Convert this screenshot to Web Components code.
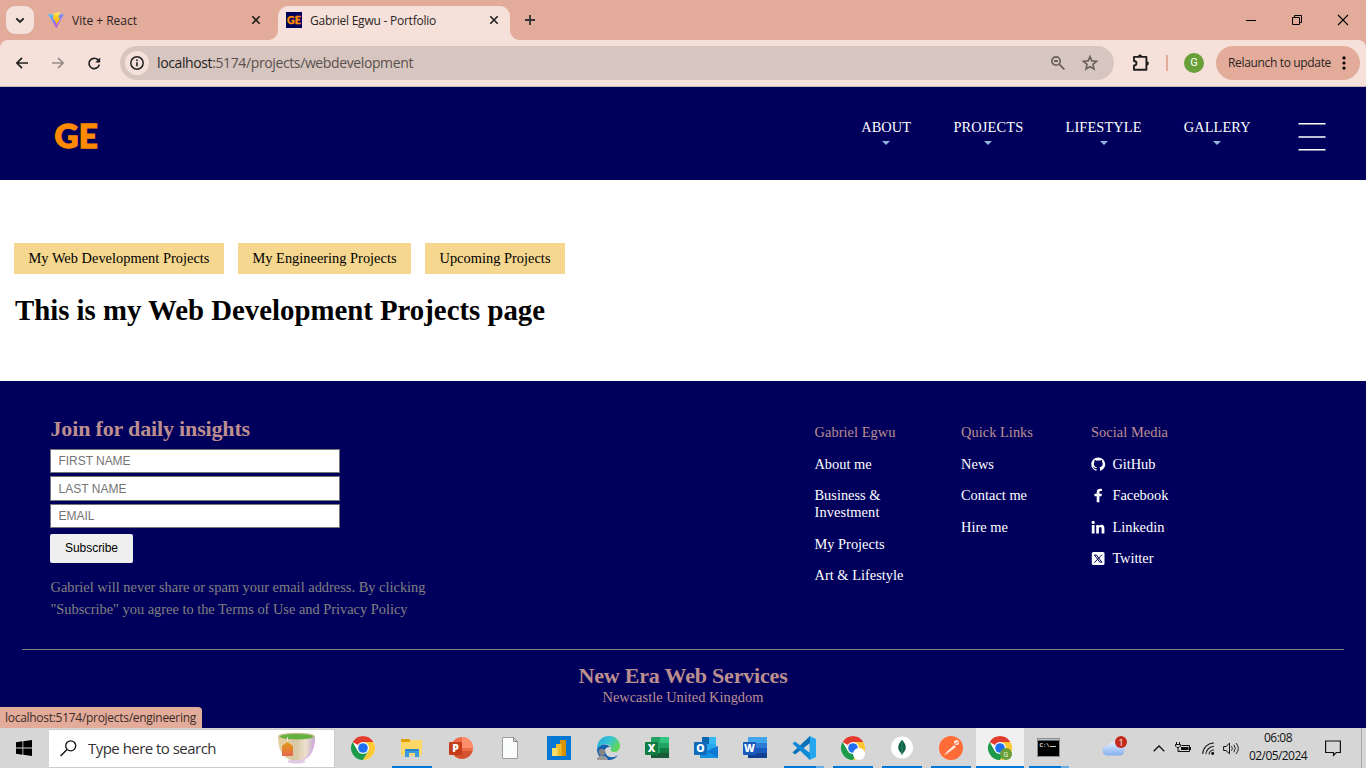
<!DOCTYPE html>
<html lang="en">
<head>
<meta charset="utf-8">
<title>Gabriel Egwu - Portfolio</title>
<style>
html,body{margin:0;height:768px;overflow:hidden;background:#fff}
</style>
</head>
<body>
<desktop-screen></desktop-screen>
<script>
const SERIF = '"Liberation Serif","Times New Roman",serif';
const SANS = '"Open Sans","Noto Sans",sans-serif';

function define(name, css, html) {
  const t = document.createElement('template');
  t.innerHTML = `<style>*{box-sizing:border-box}${css}</style>${html}`;
  customElements.define(name, class extends HTMLElement {
    constructor() {
      super();
      this.attachShadow({mode: 'open'}).append(t.content.cloneNode(true));
    }
  });
}

const CHROME = `<circle cx="12" cy="12" r="12" fill="#fff"/>
<path d="M12 12L1.6 6A12 12 0 0 1 22.4 6H12z" fill="#e33b2e"/>
<path d="M12 6H22.4A12 12 0 0 1 12 24L17.2 15z" fill="#fcc934"/>
<path d="M1.6 6A12 12 0 0 0 12 24L17.2 15L12 12L6.8 15z" fill="#1e9a4b"/>
<circle cx="12" cy="12" r="6" fill="#fff"/><circle cx="12" cy="12" r="4.8" fill="#1f6ff0"/>`;

const ICONS = {
  chevron: [28,28,`<rect width="28" height="28" rx="9" fill="#f5e1da"/><path d="M10.3 12.300l3.700 3.700 3.700-3.700" fill="none" stroke="#1f1f1f" stroke-width="1.9"/>`],
  vite: [16,16,`<defs><linearGradient id="a" x1="0" y1="0" x2=".6" y2="1"><stop stop-color="#41d1ff"/><stop offset="1" stop-color="#bd34fe"/></linearGradient><linearGradient id="b" x1="0" y1="0" x2="0" y2="1"><stop stop-color="#ffea83"/><stop offset=".3" stop-color="#ffcf20"/><stop offset="1" stop-color="#ffa800"/></linearGradient></defs><path d="M0 2L8 3.2 16 2 8.3 16z" fill="url(#a)"/><path d="M11.800 0L5.5 1.2 5.100 8l2.300-.4-.6 3 1.600-.5-.9 4.200L12.600 6.300l-2.300.3z" fill="url(#b)"/>`],
  close: [10,10,`<path d="M1.3 1.3l7.400 7.400M8.7 1.3l-7.400 7.400" stroke="#1f1f1f" stroke-width="1.6"/>`],
  plus: [10,10,`<path d="M0 5h10M5 0v10" stroke="#333" stroke-width="1.8"/>`],
  min: [10,10,`<path d="M0 5.5h10" stroke="#000"/>`],
  restore: [10,10,`<path d="M.5 2.5h7v7h-7zM2.5 2.5v-2h7v7h-2" fill="none" stroke="#000"/>`],
  winclose: [10,10,`<path d="M0 0l10 10M10 0L0 10" stroke="#000" stroke-width="1.1"/>`],
  back: [12,12,`<path d="M12 6H1.2M6 .9L.9 6 6 11.1" fill="none" stroke="#1f1f1f" stroke-width="1.7"/>`],
  forward: [12,12,`<path d="M0 6h10.8M6 .9L11.100 6 6 11.1" fill="none" stroke="#9a8c88" stroke-width="1.7"/>`],
  reload: [13,13,`<path d="M11.3 7.6A5.2 5.2 0 1 1 10 2.900L11.300 4.200" fill="none" stroke="#1f1f1f" stroke-width="1.7"/><path d="M12.200 .4v5H7.200z" fill="#1f1f1f"/>`],
  info: [24,24,`<circle cx="12" cy="12" r="12" fill="#f5e1da"/><circle cx="12" cy="12" r="6.200" fill="none" stroke="#222" stroke-width="1.5"/><path d="M12 11.300v4" stroke="#222" stroke-width="1.6"/><circle cx="12" cy="9.200" r=".95" fill="#222"/>`],
  zoom: [14,14,`<circle cx="5" cy="5" r="4.200" fill="none" stroke="#69605d" stroke-width="1.700"/><path d="M3 5h4M8.300 8.300l5.100 5.100" stroke="#69605d" stroke-width="1.800"/>`],
  star: [16,16,`<path d="M8 1.600l1.850 4.300 4.700.4-3.600 3.100 1.100 4.600L8 11.600l-4.050 2.400 1.100-4.600-3.600-3.100 4.700-.4z" fill="none" stroke="#69605d" stroke-width="1.600"/>`],
  puzzle: [17,17,`<path transform="translate(.7 -1)" d="M1.300 2.900h12.400v12.800H1.300v-4.200q2.500-.3 2.500-2.300T1.300 7z" fill="none" stroke="#1f1f1f" stroke-width="1.900" stroke-linejoin="round"/><path transform="translate(.7 -1)" d="M5.500 2.500a1.800 1.800 0 0 1 3.600 0zM14 7.500a1.900 1.900 0 0 1 0 3.800z" fill="#1f1f1f" stroke="#1f1f1f" stroke-width=".6"/>`],
  dots: [4,14,`<circle cx="2" cy="1.900" r="1.600"/><circle cx="2" cy="7" r="1.600"/><circle cx="2" cy="12.100" r="1.600"/>`],
  menu: [28,28,`<path d="M.5 0h27v1.400H.5zM.5 13.300h27v1.400H.5zM.5 26h27v1.400H.5z" fill="#fff"/>`],
  github: [15,15,`<path transform="scale(.9)" d="M8 .5C3.700.5.300 3.900.300 8.100c0 3.400 2.200 6.200 5.200 7.200.4.100.6-.2.600-.4v-1.500c-2.100.5-2.700-.9-2.700-.9-.4-.9-.9-1.200-.9-1.200-.7-.5.1-.5.1-.5.800.1 1.200.8 1.200.8.700 1.200 1.800.9 2.300.6.100-.5.3-.9.500-1-1.700-.2-3.500-.9-3.500-3.800 0-.8.300-1.500.8-2.100-.1-.2-.3-1 .1-2 0 0 .7-.2 2.100.8 1.300-.3 2.600-.3 3.900 0 1.500-1 2.100-.8 2.100-.8.400 1 .2 1.800.1 2 .5.600.8 1.300.8 2.100 0 2.900-1.800 3.600-3.500 3.800.3.200.5.700.5 1.400v2.300c0 .2.200.5.600.4 3-1 5.200-3.900 5.200-7.200C15.700 3.900 12.300.5 8 .5z" fill="#fff"/>`],
  facebook: [15,15,`<path d="M8.400 14.300V8.200h2.100l.4-2.500H8.400V4.300c0-.8.400-1.300 1.400-1.300h1.200V.9C10.600.8 9.900.7 9.100.7 7.100.7 5.700 1.900 5.700 4.100v1.600H3.400v2.500h2.300v6.100z" fill="#fff"/>`],
  linkedin: [15,15,`<path d="M.8 5h2.800v8.500H.8zM5.200 5h2.600v1.200C8.300 5.300 9.300 4.800 10.400 4.800c2.300 0 3 1.400 3 3.700v5h-2.800V9c0-1.100-.2-2-1.300-2s-1.400.9-1.400 2v4.500H5.200z" fill="#fff"/><circle cx="2.200" cy="2.400" r="1.600" fill="#fff"/>`],
  twitter: [15,15,`<rect x=".8" y="1" width="12.700" height="13" rx="1.600" fill="#fff"/><path d="M3.400 4h2l5.500 7.200H8.900zM11 3.700L3.400 11.600" fill="none" stroke="#00005c" stroke-width="1"/>`],
  windows: [16,16,`<path d="M0 2.200l6.500-.9v6.300H0zM7.300 1.200L16 0v7.600H7.300zM0 8.400h6.500v6.300L0 13.800zM7.300 8.400H16V16l-8.700-1.200z"/>`],
  search: [17,17,`<circle cx="10.700" cy="5.800" r="5" fill="none" stroke="#111" stroke-width="1.300"/><path d="M7 9.400L.6 16" stroke="#111" stroke-width="1.400"/>`],
  cup: [40,34,`<defs><linearGradient id="c"><stop stop-color="#e5cf9c"/><stop offset=".5" stop-color="#d9c9a8"/><stop offset=".75" stop-color="#ece0cf"/><stop offset="1" stop-color="#bda9cc"/></linearGradient><linearGradient id="t" x2="0" y2="1"><stop stop-color="#e39a12"/><stop offset="1" stop-color="#e5684f"/></linearGradient></defs><ellipse cx="20.500" cy="29.500" rx="9" ry="2" fill="#dfcbe3"/><path d="M2 4.500C2 15 5 23 12 27q2 1 4 1h9q2 0 4-1c7-4 10-12 10-22.500z" fill="url(#c)"/><path d="M38 9c-1 10-4 16-11 18.500" fill="none" stroke="#dfa5ee" stroke-width="1.500" opacity=".7"/><ellipse cx="20.500" cy="4.300" rx="18.500" ry="3.500" fill="#c9bd8a"/><ellipse cx="20.500" cy="4.600" rx="16.500" ry="2.700" fill="#61b23e"/><path d="M11.500 5v7" stroke="#eee2cc"/><path d="M6 14l5.500-4 5.500 4v10H6z" fill="url(#t)"/>`],
  chrome: [24,24,CHROME],
  chromeW: [24,24,CHROME+`<circle cx="18" cy="18" r="6" fill="#fff"/>`],
  chromeG: [24,24,CHROME+`<circle cx="18" cy="18" r="6" fill="#689f38"/><text x="18" y="20.500" font-size="7" font-family="Roboto,sans-serif" fill="#e8f3dc" text-anchor="middle">G</text>`],
  folder: [24,24,`<path d="M1 3h8.500l1 2H22v3H1z" fill="#e2a100"/><path d="M1 6h8.500l2-2H22v15.500H1z" fill="#fbd866"/><path d="M5 21v-8h14v8h-4v-4H9v4z" fill="#3b9ade"/><path d="M6 13h12v2H6z" fill="#2583cb"/>`],
  ppt: [24,24,`<circle cx="13" cy="12" r="11" fill="#ed6c47"/><path d="M13 1a11 11 0 0 1 11 11H13z" fill="#ff8f6b"/><path d="M2.500 15h21A11 11 0 0 1 2.500 15z" fill="#d35230"/><rect x="0" y="6" width="13" height="13" rx="1" fill="#c43e1c"/><text x="6.500" y="16.300" font-size="10.500" font-weight="800" font-family="Open Sans,sans-serif" fill="#fff" text-anchor="middle">P</text>`],
  file: [24,24,`<path d="M4.500 1.500h11l4 4v17h-15z" fill="#fafbfb" stroke="#9d9d9d"/><path d="M15.500 1.500v4h4z" fill="#ddd" stroke="#888"/>`],
  pbi: [24,24,`<path d="M0 0h24v24H0z" fill="#0678d4"/><path d="M13 4h6v16h-6z" fill="#d99300"/><path d="M9 8h5.500v12H9z" fill="#f0bc29"/><path d="M5 12h5.500v8H5z" fill="#f9dc65"/>`],
  edge: [24,24,`<defs><linearGradient id="e" x2="1" y2=".5"><stop stop-color="#21a4df"/><stop offset=".55" stop-color="#36c5d1"/><stop offset="1" stop-color="#61d957"/></linearGradient></defs><path d="M1 13C1 4 7 0 13 0c7 0 11 5 11 10 0 4-3 6-6 6s-4-2-3-4C15 8 6 6 1 13z" fill="url(#e)"/><path d="M1 13c3-5 10-6 13-2-5 2-5 9 0 10 4 1 6-1 8-2-3 5-9 6-14 4-5-1-7-6-7-10z" fill="#1260b0"/><path d="M14 11c-4 3-4 9 2 10-4 0-7-3-7-6s2-4 5-4z" fill="#d6d6d6"/><circle cx="6" cy="16" r="3.300" fill="#858585"/><path d="M1 24c0-6 10-6 11 0z" fill="#999"/>`],
  excel: [24,24,`<rect x="6" y="1" width="18" height="21" rx="1" fill="#21a366"/><path d="M15 1h9v6h-9z" fill="#33c481"/><path d="M15 12h9v6h-9z" fill="#107c41"/><path d="M6 17h18v5H6z" fill="#185c37"/><rect y="6" width="13" height="13" rx="1" fill="#107c41"/><text x="6.500" y="16.300" font-size="10.500" font-weight="800" font-family="Open Sans,sans-serif" fill="#fff" text-anchor="middle">X</text>`],
  outlook: [24,24,`<rect x="8" y="1" width="14" height="16" fill="#28a8ea"/><path d="M8 1h7v7H8z" fill="#0865ae"/><path d="M15 1h7v7h-7z" fill="#35b8f1"/><path d="M6 10l9 6 9-6v12H6z" fill="#1490df"/><path d="M24 10v12L13 15z" fill="#0f78d4"/><rect y="6" width="13" height="13" rx="1" fill="#0f6cbd"/><text x="6.500" y="16.300" font-size="10.500" font-weight="800" font-family="Open Sans,sans-serif" fill="#fff" text-anchor="middle">O</text>`],
  word: [24,24,`<rect x="5" y="1" width="19" height="21" rx="1" fill="#2b7cd3"/><path d="M5 1h19v6H5z" fill="#41a5ee"/><path d="M5 12h19v5H5z" fill="#185abd"/><path d="M5 17h19v5H5z" fill="#103f91"/><rect y="6" width="13" height="13" rx="1" fill="#185abd"/><text x="6.500" y="16.300" font-size="10.500" font-weight="800" font-family="Open Sans,sans-serif" fill="#fff" text-anchor="middle">W</text>`],
  vscode: [24,24,`<path d="M17.500 0L24 3v18l-6.500 3z" fill="#25a7f0"/><path d="M18 0v7L3 18.500.5 16.500z" fill="#0872b9"/><path d="M18 24v-7L3 5.500.5 7.500z" fill="#0e8bd8"/>`],
  mongo: [24,24,`<circle cx="12" cy="11.500" r="11" fill="#fff"/><path d="M12 4c5 5 5 10 0 14-5-4-5-9 0-14z" fill="#116149"/><path d="M12 4v15" stroke="#2c8e5a" stroke-width="1"/>`],
  postman: [24,24,`<circle cx="12" cy="12" r="12" fill="#ff6c37"/><path d="M5 19.500l2.500-3.500 7.500-7 2 2L9 17z" fill="#ffe6dc"/><circle cx="17.500" cy="6.500" r="2.500" fill="#ffe6dc"/><path d="M16 8l3-2" stroke="#ff6c37"/>`],
  cmd: [24,24,`<path d="M.5 2.500h22v18H.5z" fill="#000" stroke="#8b8b8b"/><path d="M1 3h21v1.500H1z" fill="#bac6cf"/><text x="2.500" y="10.500" font-size="6" font-weight="700" font-family="Liberation Mono,monospace" fill="#ddd" textLength="10">C:\\</text><path d="M13 10.500h6" stroke="#ccc"/>`],
  cloud: [26,22,`<defs><linearGradient id="d" x2="0" y2="1"><stop stop-color="#e4edff"/><stop offset="1" stop-color="#84b1ee"/></linearGradient></defs><path d="M5 18.500a5 5 0 0 1 1-10A7 7 0 0 1 18 8a5.500 5.500 0 0 1 1 10.500z" fill="url(#d)"/><circle cx="19" cy="5" r="6" fill="#c42b1c"/><text x="19" y="8.500" font-size="9" font-family="Open Sans,sans-serif" fill="#fff" text-anchor="middle">1</text>`],
  up: [12,7,`<path d="M.7 6.300L6 1l5.300 5.300" fill="none" stroke="#111" stroke-width="1.300"/>`],
  battery: [17,13,`<path d="M6.500 3.500h8v6h-10v-1" fill="none" stroke="#111"/><path d="M6 5h7.500v3H6z" fill="#111"/><path d="M15.500 5v3" stroke="#111"/><path d="M1.500 0v2.500M4.500 0v2.500M3 6v3.500h2" stroke="#111" fill="none"/><path d="M.5 2.500h5V4L4 5.500H2L.5 4z" stroke="#111" fill="#d6d6d6"/>`],
  wifi: [13,13,`<path d="M.7 12A11.300 11.300 0 0 1 12 1M3.900 12.300A8 8 0 0 1 12 4.500M7 12.500A5 5 0 0 1 12 8" fill="none" stroke="#222" stroke-width="1.100"/><circle cx="10.700" cy="11.500" r="1.400"/>`],
  sound: [17,13,`<path d="M.6 4.500H3L6.500 1.200v10.600L3 8.500H.6z" fill="none" stroke="#111"/><path d="M8.500 4.300q1.800 2.200 0 4.400M10.800 2.700q3 3.800 0 7.600M13 1q4.600 5.500 0 11" fill="none" stroke="#222"/>`],
  note: [16,16,`<path d="M.6 1h14.800v11.500h-4L8.500 15.300V12.500H.6z" fill="none" stroke="#111" stroke-width="1.200"/>`]
};

customElements.define('ui-icon', class extends HTMLElement {
  constructor() {
    super();
    this.attachShadow({mode: 'open'});
  }
  connectedCallback() {
    const [w, h, body] = ICONS[this.getAttribute('name')];
    this.shadowRoot.innerHTML = `<style>:host{display:block;flex:none;width:${w}px;height:${h}px}svg{display:block;overflow:visible}</style><svg width="${w}" height="${h}" viewBox="0 0 ${w} ${h}">${body}</svg>`;
  }
});

define('browser-tabs', `
:host{display:grid;grid-template-columns:40px 238px 232px 30px 1fr auto;height:40px;background:#e3ab9a;font:12px ${SANS};color:#2b2523}
.first{padding:6px}
.tab{display:grid;grid-template-columns:16px 1fr 10px;column-gap:8px;align-items:center;padding:0 17px 0 8px;height:40px}
.active{position:relative;background:#f5e1da;margin-top:6px;height:34px;border-radius:10px 10px 0 0;padding:0 11px 6px 8px}
.active:before,.active:after{content:"";position:absolute;bottom:0;width:10px;height:10px}
.active:before{left:-10px;background:radial-gradient(circle at 0 0,transparent 9.5px,#f5e1da 10.5px)}
.active:after{right:-10px;background:radial-gradient(circle at 100% 0,transparent 9.5px,#f5e1da 10.5px)}
.ge{width:16px;height:16px;background:#00005c;color:#ff8a00;font:900 10.5px/16px Lato,"Open Sans",sans-serif;-webkit-text-stroke:.4px #ff8a00;text-align:center}
.new{padding:15px 0 0 15px}
.win{display:grid;grid-template-columns:repeat(3,46px);justify-items:center;align-items:center}
`, `<div class="first"><ui-icon name="chevron"></ui-icon></div>
<div class="tab"><ui-icon name="vite"></ui-icon><fit-text w="65">Vite + React</fit-text><ui-icon name="close"></ui-icon></div>
<div class="tab active"><div class="ge"><fit-text w="14">GE</fit-text></div><fit-text w="126">Gabriel Egwu - Portfolio</fit-text><ui-icon name="close"></ui-icon></div>
<div class="new"><ui-icon name="plus"></ui-icon></div><i></i>
<div class="win"><ui-icon name="min"></ui-icon><ui-icon name="restore"></ui-icon><ui-icon name="winclose"></ui-icon></div>`);

define('browser-toolbar', `
:host{display:flex;align-items:center;height:47px;background:#e3ab9a;font:12px ${SANS};color:#2b2523}
.bar{display:flex;align-items:center;width:1366px;height:47px;background:#f5e1da;border-radius:8px 8px 0 0;border-bottom:1px solid #cbb5ae;padding:0 6px 0 16px}
.bar>*{flex:none}
.nav{display:flex;gap:24px;align-items:center;width:104px}
.url{display:flex;align-items:center;width:994px;height:34px;border-radius:17px;background:#d7c6bf;padding:0 16px 0 5px;font-size:14px;color:#57504e}
.url b{font-weight:400;color:#1f1f1f}
.url fit-text{margin:-1px 0 0 8px}
.sp{flex:1}
.ext{margin-left:18px}
.sep{width:2px;height:16px;background:#e3ab9a;margin:0 16px 0 17px}
.av{width:20px;height:20px;border-radius:50%;background:#689f38;color:#fff;font:11px/20px Roboto;text-align:center}
.up{display:flex;align-items:center;justify-content:space-between;width:144px;height:34px;border-radius:17px;background:#e3ab9a;margin-left:12px;padding:0 14px 0 12px}
.up fit-text{margin-top:-1px}
`, `<div class="bar"><div class="nav"><ui-icon name="back"></ui-icon><ui-icon name="forward"></ui-icon><ui-icon name="reload"></ui-icon></div>
<div class="url"><ui-icon name="info"></ui-icon><fit-text w="256"><b>localhost</b>:5174/projects/webdevelopment</fit-text><span class="sp"></span><ui-icon name="zoom"></ui-icon><ui-icon name="star" style="margin-left:17px"></ui-icon></div>
<ui-icon class="ext" name="puzzle"></ui-icon><span class="sep"></span><span class="av">G</span>
<div class="up"><fit-text w="103">Relaunch to update</fit-text><ui-icon name="dots"></ui-icon></div></div>`);

define('nav-item', `
:host{display:block;text-align:center;font:14.4px/17px ${SERIF};color:#fff}
i{display:block;width:0;margin:5px auto 0;border:4px solid transparent;border-top-color:#93b5dc;border-bottom:0}
`, `<slot></slot><i></i>`);

define('site-header', `
:host{display:flex;height:93px;background:#00005c;padding-left:54px}
.logo{width:807.200px;padding:28px 0 0 .5px;font:900 33px/40px Lato,"Open Sans",sans-serif;color:#ff8a00;-webkit-text-stroke:1.400px #ff8a00}
nav{display:grid;grid-template-columns:50px 70px 76px 67px;column-gap:42.200px;padding-top:32px}
ui-icon{margin:36px 0 0 47.200px}
`, `<div class="logo"><fit-text w="43.500">GE</fit-text></div>
<nav><nav-item><fit-text w="50">ABOUT</fit-text></nav-item><nav-item><fit-text w="70">PROJECTS</fit-text></nav-item><nav-item><fit-text w="76">LIFESTYLE</fit-text></nav-item><nav-item><fit-text w="67">GALLERY</fit-text></nav-item></nav>
<ui-icon name="menu"></ui-icon>`);

define('project-page', `
:host{display:block;height:201px;background:#fff;padding:63px 14px 0;font:14.4px/31px ${SERIF};color:#000}
.tabs{display:flex;gap:14px}
.tabs span{background:#f5d78f;height:31px;padding:0 14.5px;white-space:nowrap}
h1{margin:19px 0 0 1px;font:bold 28.8px/34px ${SERIF}}
`, `<div class="tabs"><span><fit-text w="181">My Web Development Projects</fit-text></span><span><fit-text w="144">My Engineering Projects</fit-text></span><span><fit-text w="111">Upcoming Projects</fit-text></span></div>
<h1><fit-text w="530">This is my Web Development Projects page</fit-text></h1>`);

define('join-form', `
:host{display:block;width:764px;font:14.4px/22px ${SERIF};color:#808080}
h2{margin:0 0 7px;font:bold 22px/26px ${SERIF};color:#bc8f8f}
h2,p{padding-left:.5px}
p{margin:0}
.f{width:290px;height:24px;margin-bottom:3px;background:#fff;border:1px solid #767676;padding-left:7.500px;font:12px/22px "Liberation Sans",sans-serif;color:#757575}
.f.m{height:25px;line-height:24px}
.b{width:83px;height:29px;margin:6px 0 13px;border-radius:2px;background:#efefef;color:#000;text-align:center;font:12px/28px "Liberation Sans",sans-serif}
`, `<h2><fit-text w="199.500">Join for daily insights</fit-text></h2>
<div class="f"><fit-text w="72">FIRST NAME</fit-text></div><div class="f m"><fit-text w="68">LAST NAME</fit-text></div><div class="f"><fit-text w="36">EMAIL</fit-text></div>
<div class="b"><fit-text w="53">Subscribe</fit-text></div>
<p><fit-text w="375">Gabriel will never share or spam your email address. By clicking</fit-text><br><fit-text w="357">"Subscribe" you agree to the Terms of Use and Privacy Policy</fit-text></p>`);

define('link-column', `
:host{display:flex;flex-direction:column;gap:14.500px;align-items:flex-start;font:14.4px/17px ${SERIF};color:#fff}
header{color:#bc8f8f}
`, `<header><slot name="title"></slot></header><slot></slot>`);

define('social-link', `
:host{display:flex;align-items:center;gap:6.400px;height:17px}
`, `<slot name="icon"></slot><slot></slot>`);

define('site-footer', `
:host{display:block;height:347px;background:#00005c;color:#bc8f8f;font:14.4px/17px ${SERIF}}
.top{display:grid;grid-template-columns:764.500px 146.500px 130px 1fr;height:268px;padding:35px 0 0 50px}
link-column{margin-top:8px}
.end{margin:0 22px;border-top:1px solid #808080;text-align:center;padding-top:13px}
h2{margin:0;height:26px;font:bold 22px/26px ${SERIF}}
`, `<div class="top"><join-form></join-form>
<link-column><fit-text slot="title" w="81">Gabriel Egwu</fit-text><fit-text w="57">About me</fit-text><span><fit-text w="66">Business &amp;</fit-text><br><fit-text w="65">Investment</fit-text></span><fit-text w="70">My Projects</fit-text><fit-text w="89">Art &amp; Lifestyle</fit-text></link-column>
<link-column><fit-text slot="title" w="72">Quick Links</fit-text><fit-text w="33">News</fit-text><fit-text w="66">Contact me</fit-text><fit-text w="47">Hire me</fit-text></link-column>
<link-column><fit-text slot="title" w="77">Social Media</fit-text>
<social-link><ui-icon slot="icon" name="github"></ui-icon><fit-text w="43">GitHub</fit-text></social-link>
<social-link><ui-icon slot="icon" name="facebook"></ui-icon><fit-text w="56">Facebook</fit-text></social-link>
<social-link><ui-icon slot="icon" name="linkedin"></ui-icon><fit-text w="52">Linkedin</fit-text></social-link>
<social-link><ui-icon slot="icon" name="twitter"></ui-icon><fit-text w="41">Twitter</fit-text></social-link></link-column></div>
<div class="end"><h2><fit-text w="209">New Era Web Services</fit-text></h2><div><fit-text w="161">Newcastle United Kingdom</fit-text></div></div>`);

define('status-bubble', `
:host{position:absolute;left:0;top:707px;width:202px;height:21px;background:#e3ab9a;border-radius:0 4px 0 0;padding-left:5px;font:12px/21px ${SANS};color:#3b2c28}
`, `<slot></slot>`);

define('task-button', `
:host{display:grid;place-items:center;height:40px;width:49px;position:relative}
:host([on]):after{content:"";position:absolute;left:5px;bottom:0;width:40px;height:2px;background:#0078d7}
:host([more]):after{background:linear-gradient(90deg,#0078d7 32px,#66aee6 32px)}
:host([active]){background:linear-gradient(#f0f0f0,#f0f0f0) 1px 0/48px 40px no-repeat}
:host([active]):after{left:1px;width:48px}
`, `<slot></slot>`);

define('task-bar', `
:host{display:grid;grid-template-columns:49px 286px 3px 735px 1fr;height:40px;background:#d6d6d6;color:#111;font:12px ${SANS}}
.start{padding:12px 16px}
.find{display:flex;align-items:center;height:39px;margin-top:1px;background:#fff;border:1px solid #ccc;border-left:0;padding:0 18px 0 11px;font-size:15px;color:#333}
.find ui-icon:last-child{margin-left:auto}
.find fit-text{margin:-2px 0 0 11px}
.apps{display:flex}
.tray{display:flex;align-items:center;padding-left:29px}
.clock{width:60px;margin:-2px 0 0 8px;text-align:center;line-height:18px}
.edge{width:1px;height:40px;background:#a8a8a8;margin-left:20px}
`, `<div class="start"><ui-icon name="windows"></ui-icon></div>
<div class="find"><ui-icon name="search"></ui-icon><fit-text w="128">Type here to search</fit-text><ui-icon name="cup"></ui-icon></div><i></i>
<div class="apps">
<task-button><ui-icon name="chrome"></ui-icon></task-button><task-button on><ui-icon name="folder"></ui-icon></task-button><task-button><ui-icon name="ppt"></ui-icon></task-button><task-button><ui-icon name="file"></ui-icon></task-button><task-button><ui-icon name="pbi"></ui-icon></task-button><task-button><ui-icon name="edge"></ui-icon></task-button><task-button><ui-icon name="excel"></ui-icon></task-button><task-button><ui-icon name="outlook"></ui-icon></task-button><task-button><ui-icon name="word"></ui-icon></task-button><task-button on more><ui-icon name="vscode"></ui-icon></task-button><task-button on><ui-icon name="chromeW"></ui-icon></task-button><task-button on><ui-icon name="mongo"></ui-icon></task-button><task-button on><ui-icon name="postman"></ui-icon></task-button><task-button on active><ui-icon name="chromeG"></ui-icon></task-button><task-button on more><ui-icon name="cmd"></ui-icon></task-button></div>
<div class="tray"><ui-icon name="cloud"></ui-icon><ui-icon name="up" style="margin-left:25px"></ui-icon><ui-icon name="battery" style="margin-left:10px"></ui-icon><ui-icon name="wifi" style="margin-left:10px"></ui-icon><ui-icon name="sound" style="margin-left:8px"></ui-icon>
<div class="clock"><fit-text w="28">06:08</fit-text><br><fit-text w="58">02/05/2024</fit-text></div><ui-icon name="note" style="margin-left:16.500px"></ui-icon><span class="edge"></span></div>`);

define('desktop-screen', `
:host{display:grid;grid-template-rows:40px 47px 93px 201px 347px 40px;width:1366px;height:768px;position:relative;overflow:hidden}
`, `<browser-tabs></browser-tabs><browser-toolbar></browser-toolbar><site-header></site-header><project-page></project-page><site-footer></site-footer><task-bar></task-bar><status-bubble><fit-text w="191">localhost:5174/projects/engineering</fit-text></status-bubble>`);

/* Spaces its letters so that the line takes exactly the width in "w". */
customElements.define('fit-text', class extends HTMLElement {
  constructor() {
    super();
    this.attachShadow({mode: 'open'}).innerHTML = '<style>:host{display:inline-block;white-space:nowrap;flex:none;justify-self:start}span{display:inline-block}</style><span><slot></slot></span>';
  }
  connectedCallback() {
    const span = this.shadowRoot.querySelector('span');
    const w = parseFloat(this.getAttribute('w'));
    const gap = (w - span.getBoundingClientRect().width) / this.textContent.length;
    span.style.letterSpacing = gap.toFixed(3) + 'px';
    this.style.width = w + 'px';
  }
});
</script>
</body>
</html>
